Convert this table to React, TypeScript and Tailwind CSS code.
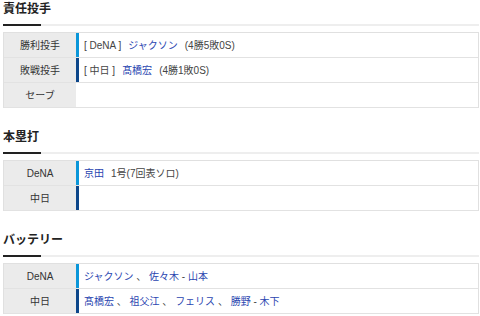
import React from 'react';

type Part = { text: string; link?: boolean; gap?: boolean };
type Row = { label: string; bar?: 'light' | 'dark'; parts: Part[] };
type Section = { title: string; rows: Row[] };

const SECTIONS: Section[] = [
  {
    title: '責任投手',
    rows: [
      {
        label: '勝利投手',
        bar: 'light',
        parts: [{ text: '[ DeNA ]' }, { text: 'ジャクソン', link: true, gap: true }, { text: '(4勝5敗0S)', gap: true }],
      },
      {
        label: '敗戦投手',
        bar: 'dark',
        parts: [{ text: '[ 中日 ]' }, { text: '髙橋宏', link: true, gap: true }, { text: '(4勝1敗0S)', gap: true }],
      },
      { label: 'セーブ', parts: [] },
    ],
  },
  {
    title: '本塁打',
    rows: [
      { label: 'DeNA', bar: 'light', parts: [{ text: '京田', link: true }, { text: '1号(7回表ソロ)', gap: true }] },
      { label: '中日', bar: 'dark', parts: [] },
    ],
  },
  {
    title: 'バッテリー',
    rows: [
      {
        label: 'DeNA',
        bar: 'light',
        parts: [
          { text: 'ジャクソン', link: true },
          { text: ' 、 ' },
          { text: '佐々木', link: true },
          { text: ' - ' },
          { text: '山本', link: true },
        ],
      },
      {
        label: '中日',
        bar: 'dark',
        parts: [
          { text: '髙橋宏', link: true },
          { text: ' 、 ' },
          { text: '祖父江', link: true },
          { text: ' 、 ' },
          { text: 'フェリス', link: true },
          { text: ' 、 ' },
          { text: '勝野', link: true },
          { text: ' - ' },
          { text: '木下', link: true },
        ],
      },
    ],
  },
];

function ResultTable({ rows }: { rows: Row[] }) {
  return (
    <div className="border-x border-t border-[#e0e0e0]">
      {rows.map((r) => (
        <div key={r.label} className="flex h-[25px] border-b border-[#e2e2e2]">
          <div className="w-[72px] shrink-0 bg-[#ebebeb] flex items-center justify-center text-[10px] text-[#333]">
            {r.label}
          </div>
          <div
            className={`w-[3px] shrink-0 ${
              r.bar === 'light' ? 'bg-[#0a96d9]' : r.bar === 'dark' ? 'bg-[#0c468a]' : 'bg-white'
            }`}
          />
          <div className="flex-1 flex items-center pl-[5px] text-[10px] text-[#444] whitespace-pre">
            {r.parts.map((p, j) =>
              p.link ? (
                <a key={j} className={`text-[#2a45b0] ${p.gap ? 'ml-[7px]' : ''}`}>
                  {p.text}
                </a>
              ) : (
                <span key={j} className={p.gap ? 'ml-[7px]' : ''}>
                  {p.text}
                </span>
              )
            )}
          </div>
        </div>
      ))}
    </div>
  );
}

export default function App() {
  return (
    <div
      className="bg-white pl-[3px] pr-[1px] w-[480px] h-[316px] overflow-hidden"
      style={{ fontFamily: '"Liberation Sans", "Noto Sans CJK JP", sans-serif' }}
    >
      {SECTIONS.map((s, i) => (
        <section key={s.title} className={i > 0 ? 'mt-[20px]' : ''}>
          <h2 className="h-[24px] pt-[1px] text-[12px] font-bold text-[#222] leading-[16px]">{s.title}</h2>
          <div className="flex h-[2px] bg-[#eeeeee]">
            <div className="w-[38px] bg-[#222]" />
          </div>
          <div className="mt-[6px]">
            <ResultTable rows={s.rows} />
          </div>
        </section>
      ))}
    </div>
  );
}
